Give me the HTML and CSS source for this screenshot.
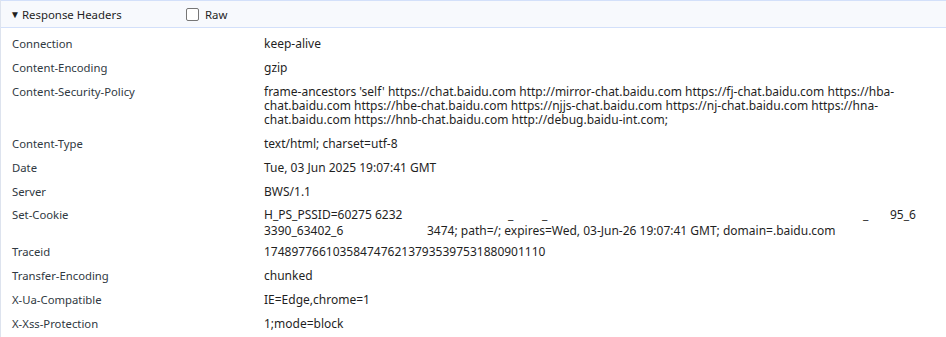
FILE: index.html
```html
<!DOCTYPE html>
<html lang="en">
<head>
  <meta charset="UTF-8" />
  <title>Response Headers</title>
  <link rel="stylesheet" href="styles.css">
</head>
<body>

  <div class="panel">
    <div class="section-head">
      <span class="caret">&#9660;</span>
      <span class="title">Response Headers</span>
      <label class="raw"><span class="box"></span>Raw</label>
    </div>

    <div class="headers">
      <div class="row"><div class="name">Connection</div><div class="value">keep-alive</div></div>
      <div class="row"><div class="name">Content-Encoding</div><div class="value">gzip</div></div>
      <div class="row"><div class="name">Content-Security-Policy</div><div class="value">frame-ancestors 'self' https://chat.baidu.com http://mirror-chat.baidu.com https://fj-chat.baidu.com https://hba-chat.baidu.com https://hbe-chat.baidu.com https://njjs-chat.baidu.com https://nj-chat.baidu.com https://hna-chat.baidu.com https://hnb-chat.baidu.com http://debug.baidu-int.com;</div></div>
      <div class="row"><div class="name">Content-Type</div><div class="value">text/html; charset=utf-8</div></div>
      <div class="row"><div class="name">Date</div><div class="value">Tue, 03 Jun 2025 19:07:41 GMT</div></div>
      <div class="row"><div class="name">Server</div><div class="value">BWS/1.1</div></div>
      <div class="row cookie">
        <div class="name">Set-Cookie</div>
        <div class="value">
          <div class="cookie-line">
            <span class="seg s1">H_PS_PSSID=60275 6232</span><span class="seg s2">_</span><span class="seg s3">_</span><span class="seg s4">_</span><span class="seg">95_6</span>
          </div>
          <div class="cookie-line">
            <span class="seg s5">3390_63402_6</span><span class="seg">3474; path=/; expires=Wed, 03-Jun-26 19:07:41 GMT; domain=.baidu.com</span>
          </div>
        </div>
      </div>
      <div class="row"><div class="name">Traceid</div><div class="value">17489776610358474762137935397531880901110</div></div>
      <div class="row"><div class="name">Transfer-Encoding</div><div class="value">chunked</div></div>
      <div class="row"><div class="name">X-Ua-Compatible</div><div class="value">IE=Edge,chrome=1</div></div>
      <div class="row"><div class="name">X-Xss-Protection</div><div class="value">1;mode=block</div></div>
    </div>
  </div>

</body>
</html>
```

FILE: styles.css
```css
body {
  margin: 0;
  background: #fff;
  font-family: "Noto Sans", "Liberation Sans", sans-serif;
  font-size: 12px;
  color: #1f1f1f;
}

.panel {
  border-left: 1px solid #dde3ee;
  min-height: 337px;
  box-sizing: border-box;
}

.section-head {
  display: flex;
  align-items: center;
  height: 26px;
  background: #f7f9fd;
  border-top: 1px solid #d3e0fa;
  border-bottom: 1px solid #d3e0fa;
  padding-left: 9px;
  font-size: 11.4px;
  color: #1f1f1f;
}

.caret {
  font-size: 10px;
  width: 12px;
}

.title {
  width: 164px;
}

.raw {
  display: flex;
  align-items: center;
}

.box {
  width: 11px;
  height: 11px;
  border: 1px solid #767676;
  border-radius: 2px;
  margin-right: 6px;
  background: #fff;
}

.headers {
  padding-top: 4px;
}

.row {
  display: flex;
  padding: 5px 0;
  line-height: 14px;
}

.row.cookie {
  padding: 3px 0 1px;
}

.name {
  width: 252px;
  flex-shrink: 0;
  padding-left: 11px;
  font-size: 11.3px;
  color: #303942;
}

.cookie .name {
  padding-top: 1px;
}

.value {
  flex: 1;
  padding-right: 10px;
}

.cookie-line {
  display: flex;
  white-space: nowrap;
  line-height: 16px;
}

.seg {
  flex-shrink: 0;
}

.s1 { width: 244px; }
.s2 { width: 34px; }
.s3 { width: 321px; }
.s4 { width: 27px; }
.s5 { width: 163px; }
```
